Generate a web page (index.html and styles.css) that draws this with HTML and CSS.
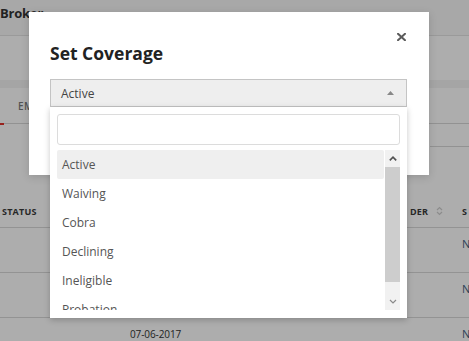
FILE: index.html
```html
<!DOCTYPE html>
<html>
<head>
<meta charset="utf-8">
<link rel="stylesheet" href="styles.css">
</head>
<body>
<div class="page">
  <div class="topbar"><span class="brand">Broker</span></div>
  <div class="subbar"></div>
  <div class="tabs">
    <div class="tabband"></div>
    <div class="tabtext">EM</div>
    <div class="tabline"><span class="tabmark"></span></div>
  </div>
  <div class="filterband"><div class="filterline"></div></div>
  <div class="grid">
    <div class="row head">
      <div class="cell th">STATUS</div>
      <div class="cell"></div>
      <div class="cell th">DER <svg class="sort" width="7" height="10" viewBox="0 0 7 10"><path d="M1 4 L3.5 1.5 L6 4 M1 6 L3.5 8.5 L6 6" fill="none" stroke="#cfcfcf" stroke-width="1.2"/></svg></div>
      <div class="cell th">S</div>
    </div>
    <div class="row">
      <div class="cell"></div><div class="cell"></div><div class="cell"></div><div class="cell n">N</div>
    </div>
    <div class="row">
      <div class="cell"></div><div class="cell"></div><div class="cell"></div><div class="cell n">N</div>
    </div>
    <div class="row">
      <div class="cell"></div><div class="cell date">07-06-2017</div><div class="cell"></div><div class="cell n">N</div>
    </div>
  </div>

  <div class="backdrop"></div>

  <div class="modal">
    <button class="close" aria-label="Close">
      <svg width="9" height="8" viewBox="0 0 9 8"><path d="M1 0.8 L8 7.2 M8 0.8 L1 7.2" stroke="#5b5b5b" stroke-width="2" stroke-linecap="square"/></svg>
    </button>
    <h2 class="title">Set Coverage</h2>
    <div class="select">
      <div class="select-box">
        <span class="select-value">Active</span>
        <svg class="caret" width="7" height="4" viewBox="0 0 7 4"><path d="M0 4 L3.5 0 L7 4 Z" fill="#888"/></svg>
      </div>
      <div class="dropdown">
        <input class="search" type="text">
        <div class="listwrap">
          <ul class="options">
            <li class="opt hl">Active</li>
            <li class="opt">Waiving</li>
            <li class="opt">Cobra</li>
            <li class="opt">Declining</li>
            <li class="opt">Ineligible</li>
            <li class="opt">Probation</li>
          </ul>
          <div class="sb">
            <div class="sb-btn up"><svg width="8" height="5" viewBox="0 0 8 5"><path d="M0.8 4.4 L4 1.2 L7.2 4.4" fill="none" stroke="#505050" stroke-width="1.6"/></svg></div>
            <div class="sb-thumb"></div>
            <div class="sb-track"></div>
            <div class="sb-btn down"><svg width="8" height="5" viewBox="0 0 8 5"><path d="M1 1 L4 4 L7 1" fill="none" stroke="#8a8a8a" stroke-width="1.2"/></svg></div>
          </div>
        </div>
      </div>
    </div>
  </div>
</div>
</body>
</html>
```

FILE: styles.css
```css
* { box-sizing: border-box; }
html, body { margin: 0; padding: 0; }
body {
  width: 469px;
  height: 341px;
  overflow: hidden;
  font-family: "Open Sans", "Liberation Sans", sans-serif;
  background: #fff;
}
.page {
  position: relative;
  width: 469px;
  height: 341px;
  overflow: hidden;
  background: #ffffff;
}
.topbar {
  height: 36px;
  background: #f8f8f8;
  border-bottom: 1px solid #e4e4e4;
  padding-top: 1px;
}
.brand {
  font-weight: 700;
  font-size: 13px;
  line-height: 18px;
  color: #333;
  letter-spacing: -0.2px;
}
.subbar {
  height: 44px;
  background: #fff;
}
.tabs {
  height: 44px;
  display: flex;
  flex-direction: column;
}
.tabband {
  height: 8px;
  background: #f3f3f3;
}
.tabtext {
  flex: 1;
  padding-left: 18px;
  padding-top: 11px;
  font-size: 10px;
  font-weight: 600;
  color: #7a7a7a;
  letter-spacing: 0.3px;
}
.tabline {
  height: 1px;
  background: #d8d8d8;
  display: flex;
}
.tabmark {
  width: 4px;
  height: 2px;
  background: #e0332b;
}
.filterband {
  height: 23px;
  display: flex;
  flex-direction: column;
  justify-content: flex-end;
}
.filterline {
  margin-left: 430px;
  height: 1px;
  background: #d8d8d8;
}
.grid { display: flex; flex-direction: column; }
.row {
  display: grid;
  grid-template-columns: 128px 280px 52px 1fr;
  height: 45px;
  border-bottom: 1px solid #d9d9d9;
}
.row.head {
  height: 81px;
  align-items: end;
  padding-bottom: 8px;
}
.cell {
  padding-left: 2px;
  font-size: 10px;
  line-height: 14px;
  color: #333;
  white-space: nowrap;
}
.row:not(.head) .cell { padding-top: 9px; }
.th {
  font-weight: 700;
  font-size: 9px;
  color: #3a3a3a;
  letter-spacing: 0.2px;
}
.sort { vertical-align: -1px; margin-left: 5px; }
.n { color: #42607e; font-size: 11px; }
.date { color: #333; font-size: 10px; letter-spacing: -0.1px; }

.backdrop {
  position: absolute;
  inset: 0;
  background: rgba(0, 0, 0, 0.32);
}
.modal {
  position: absolute;
  left: 29px;
  top: 12px;
  width: 400px;
  height: 163px;
  background: #fff;
  padding: 29px 22px 0 21px;
  box-shadow: 0 2px 8px rgba(0, 0, 0, 0.15);
}
.close {
  position: absolute;
  right: 21px;
  top: 18px;
  width: 13px;
  height: 13px;
  padding: 2px;
  border: 0;
  background: transparent;
  display: flex;
  align-items: center;
  justify-content: center;
}
.title {
  margin: 0 0 14px 0;
  font-size: 17.5px;
  line-height: 24px;
  font-weight: 700;
  color: #222;
}
.select { position: relative; }
.select-box {
  height: 28px;
  background: #eeeeee;
  border: 1px solid #c4c4c4;
  display: flex;
  align-items: center;
  justify-content: space-between;
  padding: 0 12px 0 10px;
}
.select-value {
  font-size: 12px;
  color: #444;
}
.dropdown {
  position: absolute;
  left: 0;
  right: 0;
  top: 28px;
  height: 211px;
  background: #fff;
  padding: 7px 7px 8px 7px;
  box-shadow: 0 2px 6px rgba(0, 0, 0, 0.22);
  display: flex;
  flex-direction: column;
  gap: 5px;
}
.search {
  display: block;
  width: 100%;
  height: 31px;
  border: 1px solid #dcdcdc;
  border-radius: 3px;
  background: #fff;
  margin: 0;
  outline: none;
}
.listwrap {
  height: 160px;
  display: flex;
  gap: 1px;
  overflow: hidden;
}
.options {
  flex: 1;
  list-style: none;
  margin: 0;
  padding: 0;
  overflow: hidden;
}
.opt {
  height: 29px;
  line-height: 29px;
  padding-left: 5px;
  font-size: 12px;
  color: #555;
  border-radius: 2px;
}
.opt.hl { background: #efefef; }
.sb {
  width: 15px;
  flex: none;
  background: #f1f1f1;
  display: flex;
  flex-direction: column;
}
.sb-btn {
  height: 17px;
  display: flex;
  align-items: center;
  justify-content: center;
  flex: none;
}
.sb-thumb {
  height: 115px;
  background: #cdcdcd;
  flex: none;
}
.sb-track { flex: 1; }
```
